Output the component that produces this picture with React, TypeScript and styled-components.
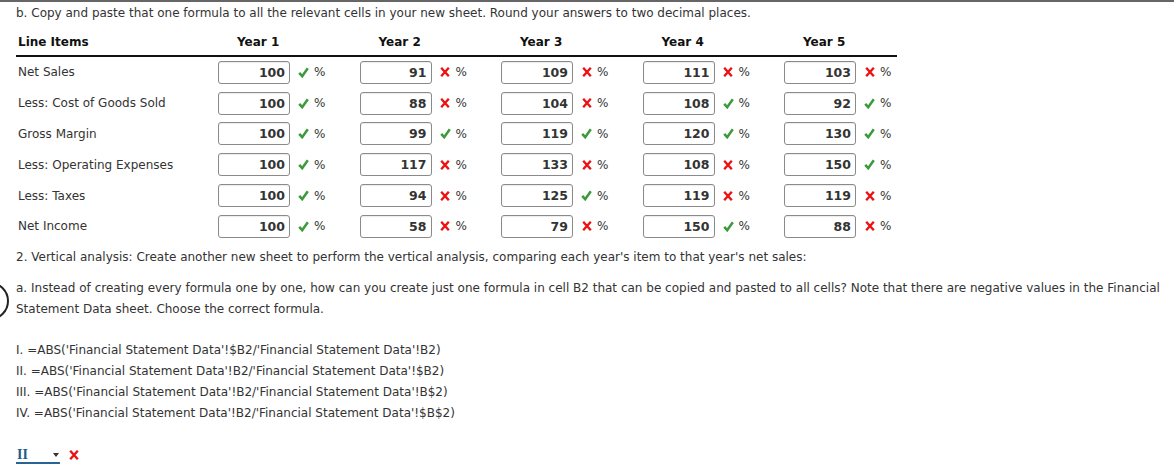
import React from "react";
import styled, { createGlobalStyle } from "styled-components";

const Global = createGlobalStyle`
  html, body { margin: 0; padding: 0; background: #fff; }
  body { font-family: "DejaVu Sans", Verdana, sans-serif; color: #333; }
`;

const Page = styled.div`
  position: relative;
  width: 1174px;
  height: 474px;
  overflow: hidden;
  border-top: 2px solid #666;
  box-sizing: border-box;
  padding: 0 0 0 16px;
`;

const Para = styled.p<{ $mt?: number }>`
  margin: ${(p) => p.$mt ?? 0}px 0 0 0;
  font-size: 12px;
  line-height: 21px;
  color: #333;
  padding-right: 6px;
`;

const Table = styled.div`
  display: grid;
  grid-template-columns: 202px repeat(4, 141.5px) 113px;
  width: 881px;
  margin-top: 5px;
`;

const HeadCell = styled.div<{ $year?: boolean }>`
  font-weight: bold;
  font-size: 12px;
  color: #111;
  height: 26px;
  line-height: 26px;
  padding-left: ${(p) => (p.$year ? "19px" : "2px")};
  border-bottom: 2px solid #111;
`;

const LabelCell = styled.div`
  font-size: 12px;
  color: #333;
  height: 30.8px;
  display: flex;
  align-items: center;
  padding-left: 2px;
  box-sizing: border-box;
`;

const ValueCell = styled.div`
  height: 30.8px;
  display: flex;
  align-items: center;
  box-sizing: border-box;
`;

const Box = styled.div`
  width: 72px;
  height: 23px;
  box-sizing: border-box;
  border: 1px solid #8a8a8a;
  border-radius: 3px;
  box-shadow: inset 0 1px 1px rgba(0, 0, 0, 0.08);
  font-weight: bold;
  font-size: 12.5px;
  color: #333;
  text-align: right;
  padding-right: 4px;
  line-height: 21px;
`;

const MarkSlot = styled.span`
  display: inline-flex;
  width: 11px;
  height: 12px;
  margin-left: 8px;
  align-items: center;
  justify-content: center;
`;

const Pct = styled.span`
  margin-left: 5px;
  font-size: 12px;
  color: #333;
`;

const Formulas = styled.div`
  margin-top: 20px;
  font-family: "DejaVu Sans", Tahoma, sans-serif;
  font-size: 12px;
  line-height: 21px;
  color: #333;
`;

const Circle = styled.div`
  position: absolute;
  left: -29px;
  top: 280px;
  width: 34px;
  height: 34px;
  border: 2px solid #222;
  border-radius: 50%;
`;

const AnswerRow = styled.div`
  display: flex;
  align-items: center;
  margin-top: 23px;
  gap: 9px;
`;

const Select = styled.div`
  position: relative;
  width: 44px;
  height: 17px;
  border-bottom: 2px solid #2a6496;
  box-sizing: border-box;
  font-family: "Liberation Serif", "Times New Roman", serif;
  font-weight: bold;
  font-size: 14px;
  line-height: 15px;
  color: #1d5c8a;
  padding-left: 1px;
`;

const Caret = styled.span`
  position: absolute;
  right: 1px;
  top: 6px;
  width: 0;
  height: 0;
  border-left: 3px solid transparent;
  border-right: 3px solid transparent;
  border-top: 4px solid #333;
`;

const Check = () => (
  <svg width="11" height="11" viewBox="0 0 11 11">
    <path d="M1.2 5.8 L4.2 9.2 L9.8 1.2" fill="none" stroke="#3b9a3b" strokeWidth="2.5" strokeLinecap="butt" strokeLinejoin="miter" />
  </svg>
);

const Cross = () => (
  <svg width="10" height="10" viewBox="0 0 10 10">
    <path d="M1.2 0.8 L8.8 9.2 M8.8 0.8 L1.2 9.2" fill="none" stroke="#ee1111" strokeWidth="2.4" />
  </svg>
);

type Row = { label: string; vals: [number, boolean][] };

const rows: Row[] = [
  { label: "Net Sales", vals: [[100, true], [91, false], [109, false], [111, false], [103, false]] },
  { label: "Less: Cost of Goods Sold", vals: [[100, true], [88, false], [104, false], [108, true], [92, true]] },
  { label: "Gross Margin", vals: [[100, true], [99, true], [119, true], [120, true], [130, true]] },
  { label: "Less: Operating Expenses", vals: [[100, true], [117, false], [133, false], [108, false], [150, true]] },
  { label: "Less: Taxes", vals: [[100, true], [94, false], [125, true], [119, false], [119, false]] },
  { label: "Net Income", vals: [[100, true], [58, false], [79, false], [150, true], [88, false]] },
];

export default function App() {
  return (
    <Page>
      <Global />
      <Circle />
      <Para $mt={1}>
        b. Copy and paste that one formula to all the relevant cells in your new sheet. Round your answers to two decimal places.
      </Para>
      <Table>
        <HeadCell>Line Items</HeadCell>
        {[1, 2, 3, 4, 5].map((y) => (
          <HeadCell key={y} $year>
            Year {y}
          </HeadCell>
        ))}
        {rows.map((r) => (
          <React.Fragment key={r.label}>
            <LabelCell>{r.label}</LabelCell>
            {r.vals.map(([v, ok], i) => (
              <ValueCell key={i}>
                <Box>{v}</Box>
                <MarkSlot>{ok ? <Check /> : <Cross />}</MarkSlot>
                <Pct>%</Pct>
              </ValueCell>
            ))}
          </React.Fragment>
        ))}
      </Table>
      <Para $mt={5}>
        2. Vertical analysis: Create another new sheet to perform the vertical analysis, comparing each year's item to that year's net sales:
      </Para>
      <Para $mt={10}>
        a. Instead of creating every formula one by one, how can you create just one formula in cell B2 that can be copied and pasted to all cells? Note that there are negative values in the Financial Statement Data sheet. Choose the correct formula.
      </Para>
      <Formulas>
        <div>I. =ABS('Financial Statement Data'!$B2/'Financial Statement Data'!B2)</div>
        <div>II. =ABS('Financial Statement Data'!B2/'Financial Statement Data'!$B2)</div>
        <div>III. =ABS('Financial Statement Data'!B2/'Financial Statement Data'!B$2)</div>
        <div>IV. =ABS('Financial Statement Data'!B2/'Financial Statement Data'!$B$2)</div>
      </Formulas>
      <AnswerRow>
        <Select>
          II
          <Caret />
        </Select>
        <Cross />
      </AnswerRow>
    </Page>
  );
}
